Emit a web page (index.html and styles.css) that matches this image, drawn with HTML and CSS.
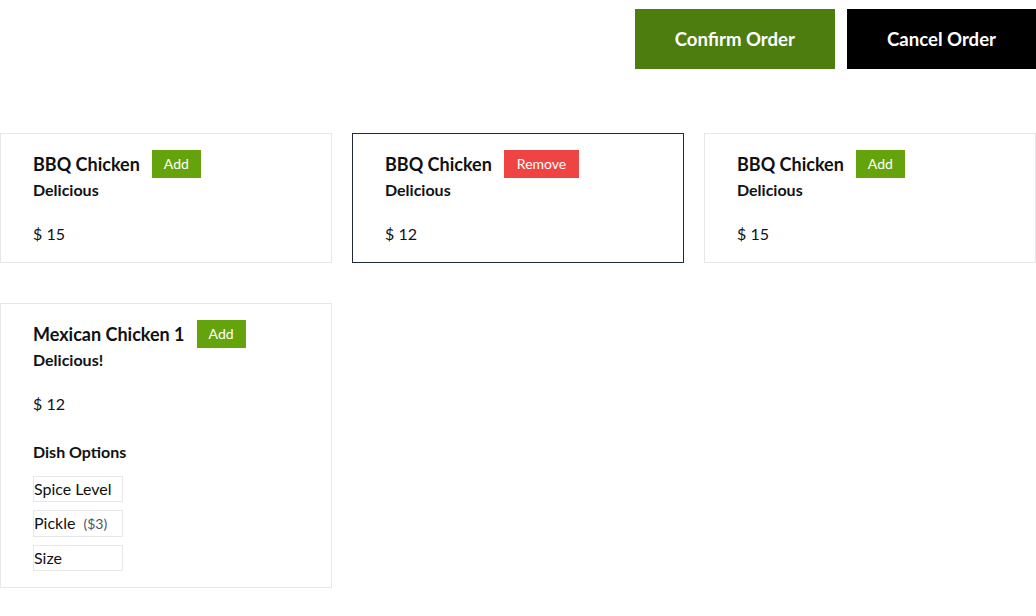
FILE: index.html
```html
<!DOCTYPE html>
<html lang="en">
<head>
<meta charset="utf-8">
<title>Order</title>
<link rel="stylesheet" href="styles.css">
</head>
<body>
<header class="actions">
  <button class="btn btn-confirm">Confirm Order</button>
  <button class="btn btn-cancel">Cancel Order</button>
</header>
<main class="dishes">
  <section class="card">
    <div class="card-head">
      <h2 class="dish-name">BBQ Chicken</h2>
      <button class="chip chip-add">Add</button>
    </div>
    <p class="dish-desc">Delicious</p>
    <p class="dish-price">$ 15</p>
  </section>
  <section class="card card-selected">
    <div class="card-head">
      <h2 class="dish-name">BBQ Chicken</h2>
      <button class="chip chip-remove">Remove</button>
    </div>
    <p class="dish-desc">Delicious</p>
    <p class="dish-price">$ 12</p>
  </section>
  <section class="card">
    <div class="card-head">
      <h2 class="dish-name">BBQ Chicken</h2>
      <button class="chip chip-add">Add</button>
    </div>
    <p class="dish-desc">Delicious</p>
    <p class="dish-price">$ 15</p>
  </section>
  <section class="card">
    <div class="card-head">
      <h2 class="dish-name">Mexican Chicken 1</h2>
      <button class="chip chip-add">Add</button>
    </div>
    <p class="dish-desc">Delicious!</p>
    <p class="dish-price">$ 12</p>
    <h3 class="options-title">Dish Options</h3>
    <ul class="options">
      <li class="option">Spice Level</li>
      <li class="option">Pickle <span class="option-extra">($3)</span></li>
      <li class="option">Size</li>
    </ul>
  </section>
</main>
</body>
</html>
```
FILE: styles.css
```css
* { box-sizing: border-box; }
html, body { margin: 0; padding: 0; background: #fff; }
body {
  font-family: Lato, "Open Sans", "Liberation Sans", sans-serif;
  color: #111;
  font-size: 16px;
  line-height: 24px;
}
.actions {
  display: flex;
  justify-content: flex-end;
  gap: 12px;
  padding-top: 9px;
}
.btn {
  font-family: inherit;
  font-size: 18.6px;
  font-weight: 700;
  line-height: 24px;
  color: #fff;
  border: 0;
  height: 60px;
  padding: 0 40px;
  cursor: pointer;
}
.btn-confirm { background: #4d7c0f; }
.btn-cancel { background: #000; }
.dishes {
  display: grid;
  grid-template-columns: repeat(3, 1fr);
  column-gap: 20px;
  row-gap: 40px;
  margin-top: 64px;
  align-items: start;
}
.card {
  border: 1px solid #e5e7eb;
  padding: 16px 32px;
}
.card-selected { border-color: #1f2937; }
.card-head {
  display: flex;
  align-items: center;
  gap: 12px;
  height: 28px;
}
.dish-name {
  margin: 0;
  font-size: 18px;
  font-weight: 700;
  line-height: 28px;
}
.chip {
  font-family: inherit;
  font-size: 14px;
  line-height: 20px;
  color: #fff;
  border: 0;
  padding: 4px 12px;
  cursor: pointer;
}
.chip-add { background: #65a30d; }
.chip-remove { background: #ef4444; padding: 4px 13px; }
.dish-desc {
  margin: 0;
  font-weight: 700;
}
.dish-price {
  margin: 20px 0 0;
}
.options-title {
  margin: 24px 0 0;
  font-size: 16px;
  font-weight: 700;
  line-height: 24px;
}
.options {
  list-style: none;
  margin: 12px 0 0;
  padding: 0;
  display: flex;
  flex-direction: column;
  gap: 8px;
}
.option {
  width: 90px;
  border: 1px solid #e5e7eb;
  line-height: 24px;
}
.option-extra {
  font-size: 14px;
  color: #4b5563;
  margin-left: 4px;
}
```
